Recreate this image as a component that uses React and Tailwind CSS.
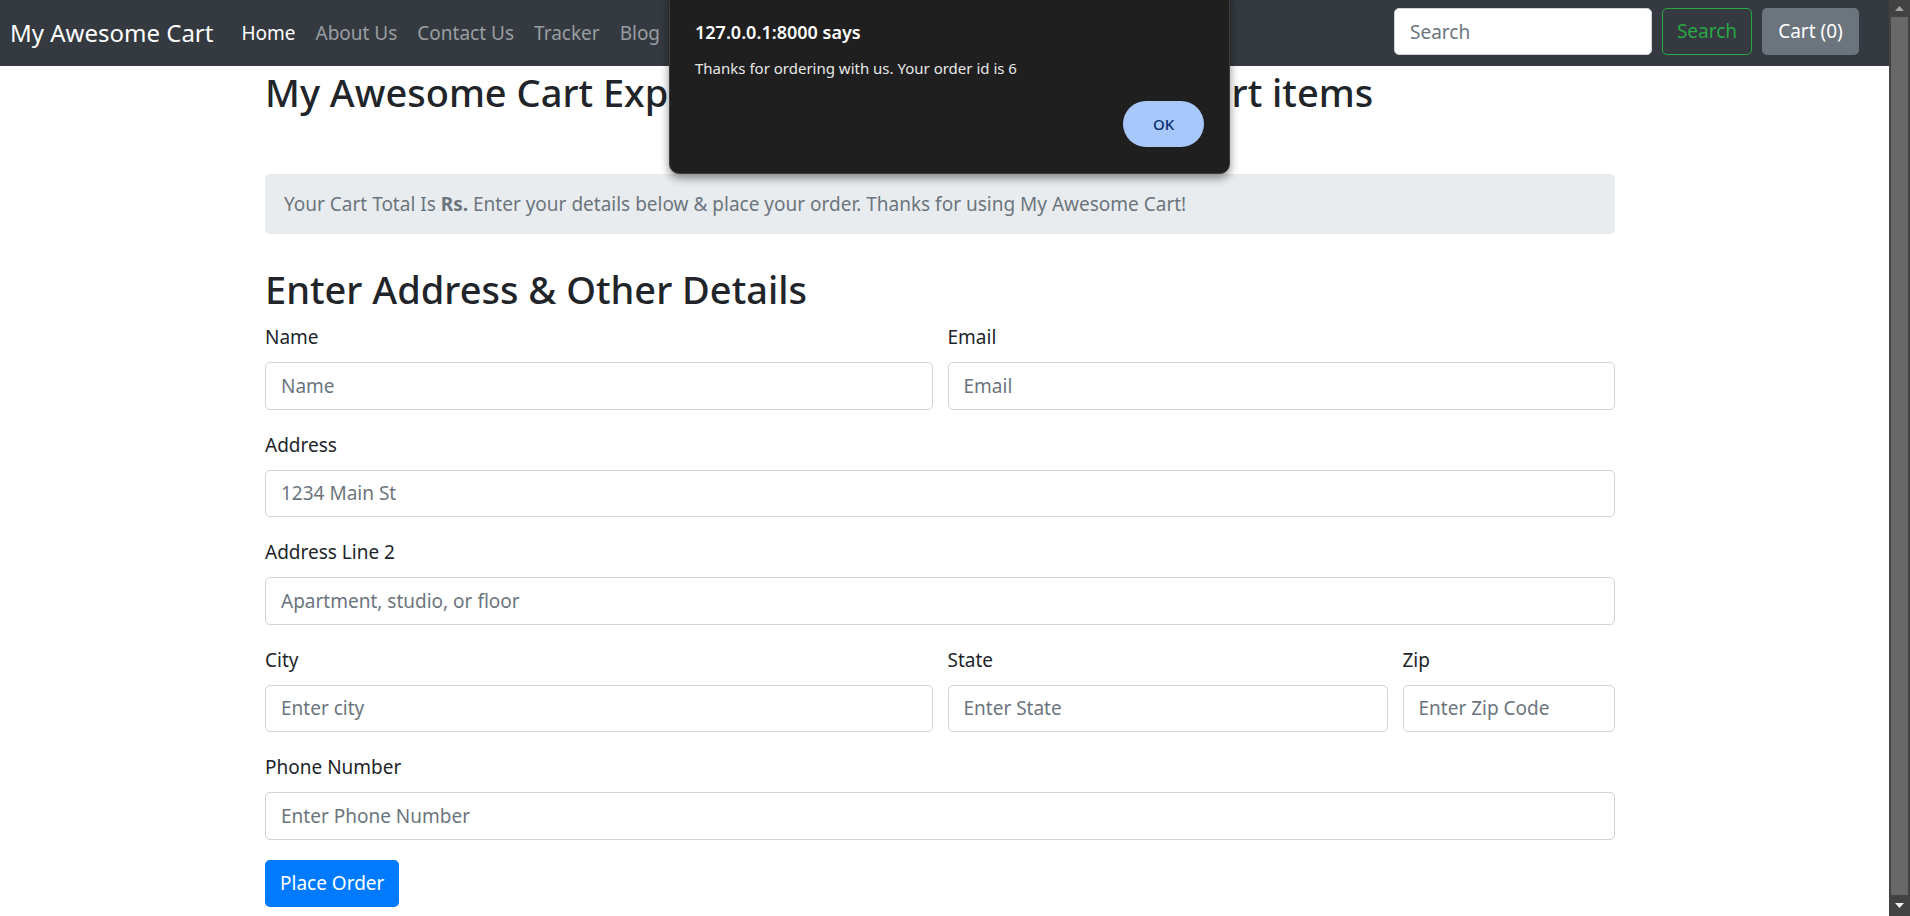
import React from 'react';

const font = { fontFamily: '"Noto Sans", "Open Sans", sans-serif' };

const Field = ({ label, placeholder, span }) => (
    <div className={span}>
        <label className="mb-[10px] block text-[19px] leading-[30px] text-[#212529]">{label}</label>
        <input
            className="block h-[47.5px] w-full rounded-[5px] border border-[#ced4da] bg-white px-[15px] text-[19px] text-[#495057] placeholder:text-[#6c757d] focus:outline-none"
            type="text"
            placeholder={placeholder}
        />
    </div>
);

const Navbar = () => (
    <nav className="flex h-[66px] items-center bg-[#343a40] pl-[10px] pr-[30px]">
        <a href="#" className="mr-[18px] text-[24px] leading-[36px] text-white">My Awesome Cart</a>
        <ul className="flex items-center">
            <li><a href="#" className="px-[10px] text-[19px] text-white">Home</a></li>
            <li><a href="#" className="px-[10px] text-[19px] text-[#9a9da0]">About Us</a></li>
            <li><a href="#" className="px-[10px] text-[19px] text-[#9a9da0]">Contact Us</a></li>
            <li><a href="#" className="px-[10px] text-[19px] text-[#9a9da0]">Tracker</a></li>
            <li><a href="#" className="px-[10px] text-[19px] text-[#9a9da0]">Blog</a></li>
        </ul>
        <form className="mb-[3px] ml-auto flex items-center">
            <input
                className="h-[47.5px] w-[258px] rounded-[5px] border border-[#ced4da] bg-white px-[15px] text-[19px] placeholder:text-[#6c757d] focus:outline-none"
                type="search"
                placeholder="Search"
            />
            <button
                className="ml-[10px] h-[47px] w-[90px] rounded-[5px] border border-[#28a745] text-[19px] text-[#28a745]"
                type="button"
            >
                Search
            </button>
        </form>
        <button className="mb-[3px] ml-[10px] h-[47px] w-[97px] rounded-[5px] bg-[#6c757d] text-[19px] text-white" type="button">
            Cart (0)
        </button>
    </nav>
);

const Alert = () => (
    <div className="absolute left-[669px] top-[-12px] flex h-[186px] w-[561px] flex-col rounded-[10px] border border-[#3d3d3d] bg-[#1f1f1f] pl-[25px] pr-[25px] pt-[31px] shadow-[0_4px_10px_rgba(0,0,0,0.45)]">
        <div className="text-[18px] font-semibold leading-[24px] text-white">127.0.0.1:8000 says</div>
        <div className="mt-[14px] text-[15px] leading-[20px] text-[#e8e8e8]">Thanks for ordering with us. Your order id is 6</div>
        <div className="mb-[26px] mt-auto flex justify-end">
            <button className="h-[46px] w-[81px] rounded-full bg-[#a8c7fa] text-[15px] font-medium text-[#062e6f]" type="button">
                OK
            </button>
        </div>
    </div>
);

const Scrollbar = () => (
    <div className="flex h-full w-[21px] flex-col bg-[#424242]">
        <div className="flex h-[17px] items-center justify-center">
            <svg width="9" height="5" viewBox="0 0 9 5"><path d="M4.5 0L9 5H0z" fill="#a3a3a3" /></svg>
        </div>
        <div className="mx-[2px] flex-1 bg-[#686868]"></div>
        <div className="flex h-[21px] items-center justify-center">
            <svg width="9" height="5" viewBox="0 0 9 5"><path d="M0 0H9L4.5 5z" fill="#f0f0f0" /></svg>
        </div>
    </div>
);

export default function App() {
    return (
        <div className="flex h-[916px] w-full overflow-hidden bg-white" style={font}>
            <div className="relative flex-1 overflow-hidden">
                <Navbar />
                <div className="ml-[265px] w-[1350px]">
                    <h2 className="mt-[2px] text-[38px] font-medium leading-[48px] text-[#212529]">
                        My Awesome Cart Express Checkout - Review Your Cart items
                    </h2>
                    <div className="mt-[58px] rounded-[5px] bg-[#e9ecef] px-[19px] py-[15px] text-[19px] leading-[30px] text-[#6c757d]">
                        Your Cart Total Is <b>Rs.</b> Enter your details below &amp; place your order. Thanks for using My Awesome Cart!
                    </div>
                    <h2 className="mb-[9px] mt-[31px] text-[38px] font-medium leading-[48px] text-[#212529]">
                        Enter Address &amp; Other Details
                    </h2>
                    <div className="grid grid-cols-12 gap-x-[15px] gap-y-[20px]">
                        <Field label="Name" placeholder="Name" span="col-span-6" />
                        <Field label="Email" placeholder="Email" span="col-span-6" />
                        <Field label="Address" placeholder="1234 Main St" span="col-span-12" />
                        <Field label="Address Line 2" placeholder="Apartment, studio, or floor" span="col-span-12" />
                        <Field label="City" placeholder="Enter city" span="col-span-6" />
                        <Field label="State" placeholder="Enter State" span="col-span-4" />
                        <Field label="Zip" placeholder="Enter Zip Code" span="col-span-2" />
                        <Field label="Phone Number" placeholder="Enter Phone Number" span="col-span-12" />
                    </div>
                    <button className="mt-[20px] h-[47px] rounded-[5px] bg-[#007bff] px-[15px] text-[19px] text-white" type="button">
                        Place Order
                    </button>
                </div>
                <Alert />
            </div>
            <Scrollbar />
        </div>
    );
}
